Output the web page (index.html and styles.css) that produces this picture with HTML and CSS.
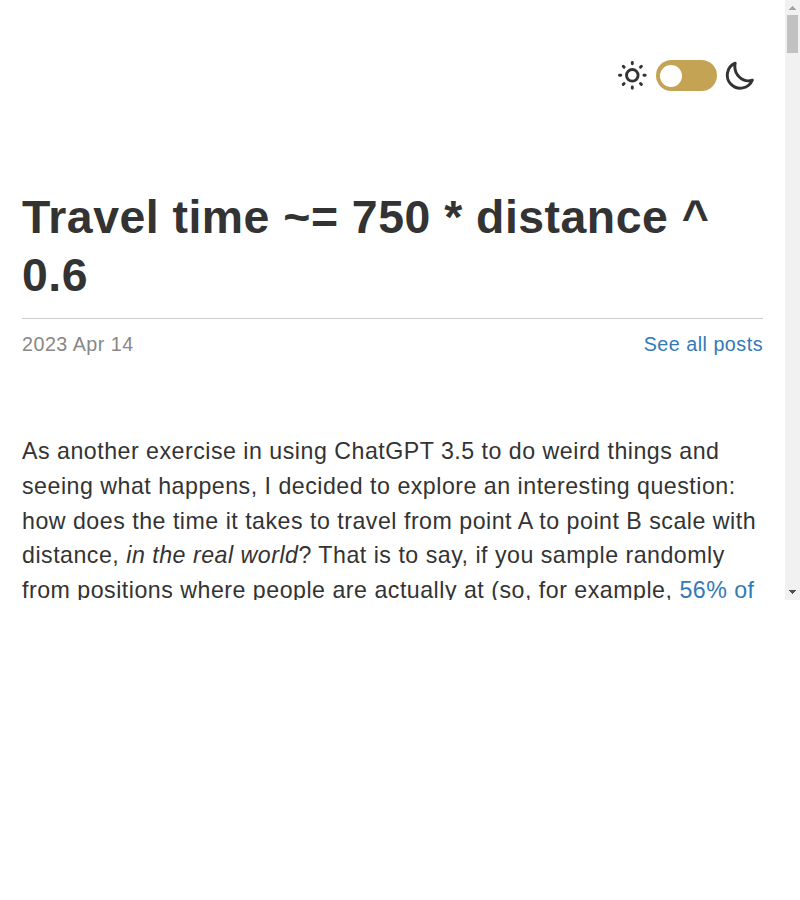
FILE: index.html
```
<!DOCTYPE html>
<html lang="en">
<head>
<meta charset="utf-8">
<title>Travel time ~= 750 * distance ^ 0.6</title>
<link rel="stylesheet" href="styles.css">
</head>
<body>
<div class="viewport">
  <main class="page">
    <div class="theme">
      <svg class="sun" width="30" height="30" viewBox="0 0 30 30" fill="none" stroke="#333" stroke-width="2.9" stroke-linecap="round">
        <circle cx="15.300" cy="15.300" r="5.800"/>
        <path d="M15.300 2.500v1.300M15.300 26.900v1.300M2.500 15.300h1.300M26.900 15.300h1.300M6.200 6.200l.9.900M23.500 23.500l.9.900M6.200 24.400l.9-.9M23.500 7.100l.9-.9"/>
      </svg>
      <span class="toggle"><span class="knob"></span></span>
      <svg class="moon" width="30" height="30" viewBox="0 0 30 30" fill="none" stroke="#333" stroke-width="2.9" stroke-linejoin="round">
        <path d="M10.200 3.200A13 13 0 1 0 27.300 20.200C17.700 23.200 8 14.200 10.200 3.200Z"/>
      </svg>
    </div>
    <h1 class="title">Travel time ~= 750 * distance ^ 0.6</h1>
    <div class="meta"><span class="date">2023 Apr 14</span><a class="link">See all posts</a></div>
    <p class="text">As another exercise in using ChatGPT 3.5 to do weird things and<br>seeing what happens, I decided to explore an interesting question:<br>how does the time it takes to travel from point A to point B scale with<br>distance, <em>in the real world</em>? That is to say, if you sample randomly<br>from positions where people are actually at (so, for example, <a class="link">56% of</a></p>
  </main>
  <div class="scrollbar">
    <svg class="arrow" width="15" height="15" viewBox="0 0 15 15" shape-rendering="crispEdges"><path fill="#a3a3a3" d="M7 6h1v1h1v1h1v1h1v1H4V9h1V8h1V7h1z"/></svg>
    <div class="thumb"></div>
    <svg class="arrow" width="15" height="15" viewBox="0 0 15 15" shape-rendering="crispEdges"><path fill="#505050" d="M4 5h7v1h-1v1H9v1H8v1H7V8H6V7H5V6H4z"/></svg>
  </div>
</div>
</body>
</html>
```
FILE: styles.css
```
body {
  margin: 0;
  background: #fff;
  color: #333;
  font-family: "Liberation Sans", Arial, sans-serif;
  font-size: 23.2px;
  line-height: 1.5;
  letter-spacing: 0.5px;
}
.viewport {
  display: flex;
  height: 600px;
  overflow: hidden;
}
.page {
  box-sizing: border-box;
  width: 785px;
  height: 600px;
  padding: 60px 22px 0;
  overflow: hidden;
  white-space: nowrap;
}
.theme {
  display: flex;
  justify-content: flex-end;
  align-items: flex-start;
  gap: 8px;
  height: 31px;
  padding-right: 8px;
}
.sun {
  margin-right: 1px;
}
.toggle {
  box-sizing: border-box;
  width: 61px;
  height: 31px;
  padding: 4.5px 4px;
  border-radius: 16px;
  background: #c4a454;
}
.knob {
  display: block;
  width: 22px;
  height: 22px;
  border-radius: 50%;
  background: #fff;
}
.title {
  margin: 97px 0 0;
  padding-bottom: 14px;
  border-bottom: 1px solid #ccc;
  font-size: 46.4px;
  line-height: 58px;
  white-space: normal;
}
.meta {
  display: flex;
  justify-content: space-between;
  margin-top: 10px;
  font-size: 19.72px;
  line-height: 30px;
}
.date {
  color: #888;
}
.link {
  color: #337ab7;
}
.text {
  margin: 75.1px 0 0;
}
.scrollbar {
  display: flex;
  flex-direction: column;
  width: 15px;
  background: #f1f1f1;
}
.arrow {
  display: block;
}
.thumb {
  width: 11px;
  height: 38px;
  margin: 0 2px auto;
  background: #c1c1c1;
}
```
